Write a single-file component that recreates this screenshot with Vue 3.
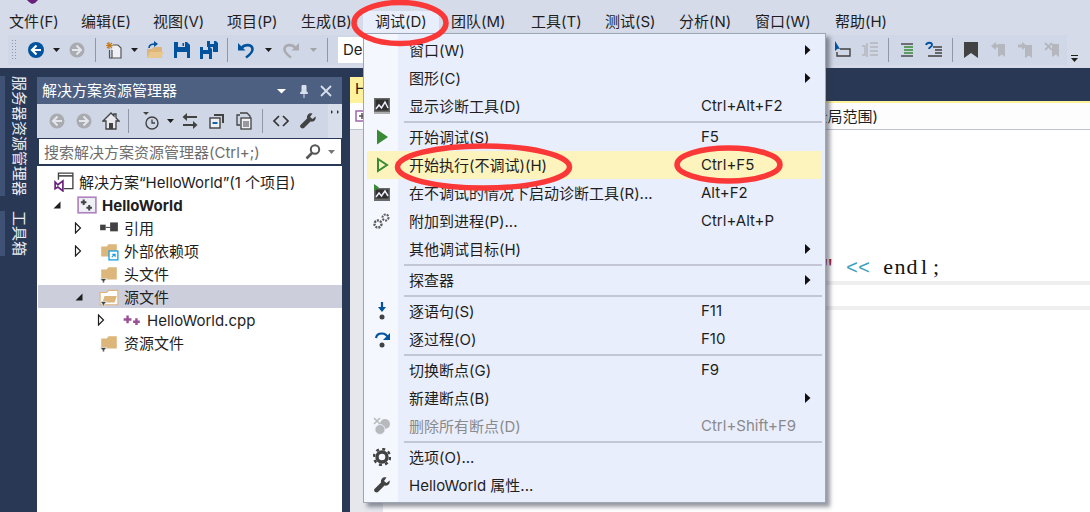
<template>
  <div class="page">
    <div class="titlebar">
      <svg class="vs-logo" width="12" height="4" viewBox="0 0 12 4"><path d="M0 0h11L8 3 5 4 2 2z" fill="#68217a" /></svg>
    </div>

    <nav class="menubar">
      <span
        v-for="item in menuBar"
        :key="item.label"
        class="menubar-item"
        :class="{ active: item.label === '调试(D)' }"
        :style="{ width: item.width + 'px' }"
      >{{ item.label }}</span>
    </nav>

    <div class="toolbar">
      <span class="grip"></span>
      <template v-for="(tool, i) in mainTools" :key="i">
        <span v-if="tool === '|'" class="tool-sep"></span>
        <span v-else-if="tool === 'dd'" class="tool-dd"><svg width="9" height="6" viewBox="0 0 9 6"><path d="M1 1h7L4.500 5z" fill="#1e1e1e" /></svg></span>
        <span v-else-if="tool === 'ddw'" class="tool-dd wide"><svg width="9" height="6" viewBox="0 0 9 6"><path d="M1 1h7L4.500 5z" fill="#1e1e1e" /></svg></span>
        <span v-else-if="tool === 'ddg'" class="tool-dd wide"><svg width="9" height="6" viewBox="0 0 9 6"><path d="M1 1h7L4.500 5z" fill="#a2a4a5" /></svg></span>
        <span v-else class="tool"><svg width="18" height="18" viewBox="0 0 18 18" v-html="icons[tool]"></svg></span>
      </template>
      <span class="combo">Debug</span>

      <div class="toolbar-right">
        <template v-for="(tool, i) in rightTools" :key="i">
          <span v-if="tool === '|'" class="tool-sep"></span>
          <span v-else class="tool"><svg width="18" height="18" viewBox="0 0 18 18" v-html="icons[tool]"></svg></span>
        </template>
        <span class="tool-overflow">
          <svg width="9" height="9" viewBox="0 0 9 9"><path d="M1 1h7v1H1zM1 4h7L4.500 8z" fill="#1e1e1e" /></svg>
        </span>
      </div>
    </div>

    <main class="workspace">
      <aside class="side-tabs">
        <span class="side-tab">服务器资源管理器</span>
        <span class="side-tab">工具箱</span>
      </aside>

      <section class="explorer">
        <header class="explorer-title">
          <span class="title-text">解决方案资源管理器</span>
          <span class="title-actions">
            <svg width="14" height="14" viewBox="0 0 14 14"><path d="M2 5h9L6.500 9.500z" fill="#fff" /></svg>
            <svg width="14" height="14" viewBox="0 0 14 14"><path d="M5 1.500h4v6l1.500 1v1h-7v-1L5 7.500zM7 10v4" fill="#d8dfec" stroke="#d8dfec" /></svg>
            <svg width="14" height="14" viewBox="0 0 14 14"><path d="M2 2l10 10M12 2 2 12" stroke="#d8dfec" stroke-width="1.800" /></svg>
          </span>
        </header>

        <div class="explorer-tools">
          <template v-for="(tool, i) in explorerTools" :key="i">
            <span v-if="tool === '|'" class="tool-sep"></span>
            <span v-else-if="tool === 'dd'" class="tool-dd narrow"><svg width="9" height="6" viewBox="0 0 9 6"><path d="M1 1h7L4.500 5z" fill="#1e1e1e" /></svg></span>
            <span v-else class="tool"><svg width="18" height="18" viewBox="0 0 18 18" v-html="icons[tool]"></svg></span>
          </template>
          <span class="explorer-overflow">
            <svg width="9" height="5" viewBox="0 0 9 5"><path d="M0 0l2 2-2 2zM6 0l2 2-2 2z" fill="#333" /></svg>
          </span>
        </div>

        <div class="explorer-search">
          <span class="search-hint">搜索解决方案资源管理器(Ctrl+;)</span>
          <svg width="18" height="18" viewBox="0 0 18 18"><circle cx="11" cy="6.500" r="4.200" fill="none" stroke="#555" stroke-width="2" /><path d="M8 10 2.500 15.500" stroke="#555" stroke-width="2.600" /></svg>
          <svg class="search-drop" width="9" height="6" viewBox="0 0 9 6"><path d="M1 1h7L4.500 5z" fill="#777" /></svg>
        </div>

        <ul class="tree">
          <li
            v-for="row in treeRows"
            :key="row.label"
            class="tree-row"
            :class="{ selected: row.selected, strong: row.strong, latin: row.latin }"
            :style="{ paddingLeft: row.indent + 'px' }"
          >
            <span v-if="row.expander" class="expander">
              <svg width="10" height="12" viewBox="0 0 10 12">
                <path v-if="row.expander === 'open'" d="M8.500 2.500v7h-7z" fill="#1e1e1e" />
                <path v-else d="M1.500 1v10l5-5z" fill="#fff" stroke="#1e1e1e" stroke-width="1.200" />
              </svg>
            </span>
            <svg class="tree-icon" width="20" height="20" viewBox="0 0 18 18" v-html="icons[row.icon]"></svg>
            <span class="tree-label">{{ row.label }}</span>
          </li>
        </ul>
      </section>

      <section class="editor">
        <div class="doc-tabs">
          <span class="doc-tab">HelloWorld.cpp</span>
        </div>
        <div class="nav-bar">
          <svg width="14" height="14" viewBox="0 0 14 14"><rect x="1" y="2" width="12" height="10" fill="#fff" stroke="#9b6aa8" stroke-width="1.500" /><path d="M4 7h6M7 4v6" stroke="#555" stroke-width="1.500" /></svg>
          <span class="nav-scope">(全局范围)</span>
        </div>
        <div class="code-area">
          <div class="code-margin"></div>
          <div class="code">
            <div class="code-line"><span class="str">"</span> <span class="op">&lt;&lt;</span> <span v-for="(ch, i) in 'endl;'" :key="i" class="cell">{{ ch }}</span></div>
            <div class="current-line"></div>
          </div>
        </div>
      </section>
    </main>

    <div class="drop-menu">
      <template v-for="(row, i) in debugMenu" :key="i">
        <div v-if="row.sep" class="menu-sep"></div>
        <div v-else class="menu-row" :class="{ hot: row.hot, disabled: row.disabled }">
          <span class="menu-icon">
            <svg v-if="row.icon" width="18" height="18" viewBox="0 0 18 18" v-html="icons[row.icon]"></svg>
          </span>
          <span class="menu-label">{{ row.label }}</span>
          <span class="menu-key">{{ row.key }}</span>
          <svg v-if="row.sub" class="menu-arrow" width="6" height="10" viewBox="0 0 6 10"><path d="M0 0l5.500 5L0 10z" fill="#111" /></svg>
        </div>
      </template>
    </div>

    <svg class="marks" width="1090" height="512" viewBox="0 0 1090 512">
      <ellipse cx="400" cy="23" rx="46" ry="20.500" />
      <ellipse cx="483.500" cy="167" rx="86" ry="21" />
      <ellipse cx="728.500" cy="164.500" rx="51.500" ry="16.500" />
    </svg>
  </div>
</template>

<script setup>
const menuBar = [
  { label: '文件(F)', width: 72 },
  { label: '编辑(E)', width: 72 },
  { label: '视图(V)', width: 74 },
  { label: '项目(P)', width: 74 },
  { label: '生成(B)', width: 74 },
  { label: '调试(D)', width: 76 },
  { label: '团队(M)', width: 80 },
  { label: '工具(T)', width: 74 },
  { label: '测试(S)', width: 74 },
  { label: '分析(N)', width: 76 },
  { label: '窗口(W)', width: 80 },
  { label: '帮助(H)', width: 76 }
]

const mainTools = ['back', 'dd', 'fwd', '|', 'newproj', 'dd', 'open', 'save', 'saveall', '|', 'undo', 'ddw', 'redo', 'ddg', '|']
const rightTools = ['cursor', 'hint', '|', 'outdent', 'comment', '|', 'mark', 'markprev', 'marknext', 'markclear']
const explorerTools = ['backg', 'fwdg', 'home', '|', 'history', 'dd', 'sync', 'collapse', 'copies', '|', 'code', 'wrench']

const treeRows = [
  { label: '解决方案“HelloWorld”(1 个项目)', indent: 16, icon: 'sln' },
  { label: 'HelloWorld', indent: 14, icon: 'proj', expander: 'open', strong: true, latin: true },
  { label: '引用', indent: 36, icon: 'refs', expander: 'closed' },
  { label: '外部依赖项', indent: 36, icon: 'extdeps', expander: 'closed' },
  { label: '头文件', indent: 61, icon: 'filter' },
  { label: '源文件', indent: 36, icon: 'filteropen', expander: 'open', selected: true },
  { label: 'HelloWorld.cpp', indent: 59, icon: 'cpp', expander: 'closed', latin: true },
  { label: '资源文件', indent: 61, icon: 'filter' }
]

const debugMenu = [
  { label: '窗口(W)', sub: true },
  { label: '图形(C)', sub: true },
  { label: '显示诊断工具(D)', key: 'Ctrl+Alt+F2', icon: 'diag' },
  { sep: true },
  { label: '开始调试(S)', key: 'F5', icon: 'play' },
  { label: '开始执行(不调试)(H)', key: 'Ctrl+F5', icon: 'playhollow', hot: true },
  { label: '在不调试的情况下启动诊断工具(R)...', key: 'Alt+F2', icon: 'diagplay' },
  { label: '附加到进程(P)...', key: 'Ctrl+Alt+P', icon: 'gears' },
  { label: '其他调试目标(H)', sub: true },
  { sep: true },
  { label: '探查器', sub: true },
  { sep: true },
  { label: '逐语句(S)', key: 'F11', icon: 'stepinto' },
  { label: '逐过程(O)', key: 'F10', icon: 'stepover' },
  { sep: true },
  { label: '切换断点(G)', key: 'F9' },
  { label: '新建断点(B)', sub: true },
  { label: '删除所有断点(D)', key: 'Ctrl+Shift+F9', icon: 'clearbp', disabled: true },
  { sep: true },
  { label: '选项(O)...', icon: 'gear' },
  { label: 'HelloWorld 属性...', icon: 'wrench' }
]

const folder = '<path d="M2 5h5l1.500-2H16v11H2z" fill="#dcb67a"/>'
const filterMark = '<path d="M1 13h6l-2.200 2.500V17H3.200v-1.500z" fill="#424242" stroke="#fff" stroke-width=".6"/>'

const icons = {
  back: '<circle cx="9" cy="9" r="8" fill="#00539c"/><path d="M9.500 4.500 5 9l4.500 4.500M5.500 9H14" fill="none" stroke="#fff" stroke-width="2.200"/>',
  fwd: '<circle cx="9" cy="9" r="7.500" fill="#a9abb0"/><path d="M8.500 4.500 13 9l-4.500 4.500M12.500 9H4" fill="none" stroke="#e4e6ee" stroke-width="2"/>',
  backg: '<circle cx="9" cy="9" r="7.500" fill="#a9abb0"/><path d="M9.500 4.500 5 9l4.500 4.500M5.500 9H14" fill="none" stroke="#e4e6ee" stroke-width="2"/>',
  fwdg: '<circle cx="9" cy="9" r="7.500" fill="#a9abb0"/><path d="M8.500 4.500 13 9l-4.500 4.500M12.500 9H4" fill="none" stroke="#e4e6ee" stroke-width="2"/>',
  newproj: '<path d="M4 1v7M1 4.500h7M2 2l5 5M7 2 2 7" stroke="#c27d1a" stroke-width="1.200"/><path d="M8 4h5l3 3v10H7V9" fill="#eef0f6" stroke="#555" stroke-width="1.200"/><path d="M4.500 9v8H7" fill="none" stroke="#555" stroke-width="1.200"/>',
  open: '<path d="M1 8h5l1.500-2H16v11H1z" fill="#dcb67a"/><path d="M1 17l3-6h14l-3 6z" fill="#e8c88f"/><path d="M3 7C3 4 5 3 9 3" fill="none" stroke="#00539c" stroke-width="1.600"/><path d="M8 0l4 3-4 3z" fill="#00539c"/>',
  save: '<path d="M1 1h13l3 3v13H1z" fill="#00539c"/><path d="M5 1h7v5H5z" fill="#d0d7e6"/><path d="M9.500 2h1.500v3H9.500z" fill="#00539c"/><path d="M4 11h10v6H4z" fill="#d0d7e6"/>',
  saveall: '<path d="M7 0h9l2 2v9h-5V6H7z" fill="#00539c"/><path d="M10 0h4v3h-4z" fill="#d0d7e6"/><path d="M0 6h10l2 2v10H0z" fill="#00539c"/><path d="M3 6h5v3H3zM3 13h6v5H3z" fill="#d0d7e6"/>',
  undo: '<path d="M4.500 7C8 3 15 3 15.500 8c.3 3.500-3 6-6.500 8.500" fill="none" stroke="#00539c" stroke-width="2.600"/><path d="M1 2v7.500h7.500z" fill="#00539c"/>',
  redo: '<path d="M13.500 7C10 3 3 3 2.500 8c-.3 3.500 3 6 6.500 8.500" fill="none" stroke="#a9abb0" stroke-width="2.600"/><path d="M17 2v7.500H9.500z" fill="#a9abb0"/>',
  cursor: '<path d="M1 0v10l2.500-2.300L6 8z" fill="#00539c"/><path d="M6 8h10v7H3v-4" fill="none" stroke="#424242" stroke-width="1.400"/>',
  hint: '<path d="M6 2v14" stroke="#b4b7bd" stroke-width="1.500"/><path d="M1 5h3v9H1M9 2h8M9 6h8M9 10h8M9 14h8" fill="none" stroke="#b4b7bd" stroke-width="1.400"/>',
  outdent: '<path d="M3 3h12" stroke="#424242" stroke-width="1.400"/><path d="M6 6h9M6 9h9M6 12h9" stroke="#388a34" stroke-width="1.400"/><path d="M3 15h12" stroke="#424242" stroke-width="1.400"/>',
  comment: '<path d="M1 4c1-3 6-3 6 0 0 2-3 2-3 4" fill="none" stroke="#00539c" stroke-width="1.800"/><path d="M8 6h9M10 9h7M10 12h7M3 15h14" stroke="#424242" stroke-width="1.400"/>',
  mark: '<path d="M2 1h14v16l-7-5-7 5z" fill="#424242"/>',
  markprev: '<path d="M9 3h7v13l-3-2.500-4 2.500z" fill="#b4b7bd"/><path d="M7 1 2 5l5 4V6.500h3v-3H7z" fill="#b4b7bd"/>',
  marknext: '<path d="M6 3h7v13l-3-2.500L6 16z" fill="#b4b7bd" transform="translate(3 1)"/><path d="M6 1l5 4-5 4V6.500H2v-3h4z" fill="#b4b7bd"/>',
  markclear: '<path d="M9 3h7v13l-3-2.500L9 16z" fill="#b4b7bd"/><path d="M2 2l7 7M9 2 2 9" stroke="#b4b7bd" stroke-width="1.800"/>',
  home: '<path d="M9 1 1 9h3v8h10V9h3l-3-3V2h-2v2z" fill="#e8e9ef" stroke="#424242" stroke-width="1.300"/><rect x="7" y="11" width="4" height="6" fill="#424242"/>',
  history: '<path d="M1 0h6L4 3z" fill="#424242"/><circle cx="10" cy="11" r="6" fill="none" stroke="#424242" stroke-width="1.400"/><path d="M10 7.500V11h3" fill="none" stroke="#424242" stroke-width="1.300"/>',
  sync: '<path d="M6 1 1.500 5 6 9V6h10V4H6zM12 9l4.500 4L12 17v-3H2v-2h10z" fill="#424242"/>',
  collapse: '<path d="M6 2h10v9h-2V4H6z" fill="#424242"/><rect x="2" y="6" width="10" height="10" fill="#eef0f6" stroke="#424242" stroke-width="1.400"/><path d="M4.500 11h5" stroke="#00539c" stroke-width="1.800"/>',
  copies: '<path d="M5 13H2V3h3M5 1h7l3 3v3" fill="none" stroke="#424242" stroke-width="1.300"/><rect x="6" y="6" width="10" height="11" fill="#eef0f6" stroke="#424242" stroke-width="1.300"/><path d="M8 10h6M8 12h6M8 14h6" stroke="#424242"/>',
  code: '<path d="M7 4 2 9l5 5M11 4l5 5-5 5" fill="none" stroke="#333" stroke-width="1.700"/>',
  wrench: '<path d="M16.500 4.500 13.500 7 11 5l2.500-3.500C10.500.5 7.500 2.500 8 6.500L1.500 13c-1.500 2 1.500 4.500 3.500 3l6.500-6.500c3.500.8 6-2 5-5.500z" fill="#424242"/>',
  sln: '<path d="M4 7V1h13v14H9" fill="#fff" stroke="#424242" stroke-width="1.200"/><path d="M4 3.500h13" stroke="#424242" stroke-width="1.400"/><path d="M1 9v6l2.500-1.500L8 17V8l-4.500 3.500z" fill="none" stroke="#68217a" stroke-width="1.500"/>',
  proj: '<rect x="1" y="2" width="16" height="14" fill="#eef0f6" stroke="#b183bf" stroke-width="1.500"/><path d="M6 4v5M3.500 6.500h5M11 9v5M8.500 11.500h5" stroke="#424242" stroke-width="1.800"/>',
  refs: '<rect x="1" y="6" width="5" height="5" fill="#424242"/><path d="M6 8.500h4" stroke="#555"/><rect x="10" y="4" width="7" height="8" fill="#424242"/>',
  extdeps: folder + '<rect x="9" y="9" width="8" height="8" fill="#fff" stroke="#1ba1e2" stroke-width="1.200"/><path d="M11.500 14.500 14 12M12 12h2.500v2.500" fill="none" stroke="#1ba1e2"/>',
  filter: folder + filterMark,
  filteropen: '<path d="M1 5h6l1.500-2H17v13H1z" fill="#fff" stroke="#dcb67a"/><path d="M3 14l2-6h11l-2 6z" fill="#dcb67a"/>' + filterMark,
  cpp: '<path d="M5 5v7M1.500 8.500h7M13 7.500v6M10 10.500h6" stroke="#9b4f96" stroke-width="2.200"/>',
  diag: '<rect x="1" y="1" width="16" height="16" fill="#6a6a6a"/><rect x="2.500" y="2.500" width="13" height="11" fill="#2f2f2f"/><path d="M3 12l3-4 2.500 3L12 5l3 6" fill="none" stroke="#eef" stroke-width="1.500"/><path d="M1 16h16" stroke="#c4c4c4" stroke-width="1.500"/>',
  diagplay: '<rect x="1" y="4" width="16" height="13" fill="#6a6a6a"/><rect x="2.500" y="5.500" width="13" height="9" fill="#2f2f2f"/><path d="M3 13l3-4 2.500 3L12 7l3 5" fill="none" stroke="#eef" stroke-width="1.500"/><path d="M1 0v7l5-3.500z" fill="#388a34"/>',
  play: '<path d="M4 1.500v15L15 9z" fill="#388a34"/>',
  playhollow: '<path d="M5 3v12l9-6z" fill="none" stroke="#388a34" stroke-width="2"/>',
  gears: '<circle cx="12.500" cy="5.500" r="3" fill="none" stroke="#5a5a5a" stroke-width="2" stroke-dasharray="2 1"/><circle cx="5" cy="12" r="3.500" fill="none" stroke="#5a5a5a" stroke-width="2.400" stroke-dasharray="2 1"/>',
  stepinto: '<path d="M9 0v6" stroke="#00539c" stroke-width="2.200"/><path d="M5 5h8L9 10z" fill="#00539c"/><circle cx="9" cy="15" r="2.500" fill="#424242"/>',
  stepover: '<path d="M3 8c1-6 10-6 12 0" fill="none" stroke="#00539c" stroke-width="2.200"/><path d="M17 3v7h-7z" fill="#00539c"/><circle cx="9" cy="15" r="2.500" fill="#424242"/>',
  clearbp: '<circle cx="12" cy="7" r="5" fill="#b8b9bc"/><circle cx="7" cy="12.500" r="5" fill="#b8b9bc" stroke="#e9eefd"/><path d="M1 1l6 6M7 1 1 7" stroke="#b8b9bc" stroke-width="1.500"/>',
  gear: '<circle cx="9" cy="9" r="5" fill="none" stroke="#424242" stroke-width="3.400"/><circle cx="9" cy="9" r="8" fill="none" stroke="#424242" stroke-width="2.400" stroke-dasharray="3 3.280"/>'
}
</script>

<style>
html,
body {
  margin: 0;
  background: #293955;
}
</style>

<style scoped>
.page {
  position: relative;
  width: 1090px;
  height: 512px;
  overflow: hidden;
  display: flex;
  flex-direction: column;
  background: #293955;
  color: #1e1e1e;
  font-family: Inter, "Noto Sans CJK SC", sans-serif;
  font-size: 15px;
}

.titlebar {
  height: 11px;
  padding-left: 27px;
  background: #d6dbe9;
  line-height: 0;
}

.vs-logo {
  display: block;
}

.menubar {
  display: flex;
  height: 22px;
  margin-bottom: 2px;
  background: #d6dbe9;
  line-height: 22px;
  white-space: nowrap;
  box-shadow: 0 2px 0 #d6dbe9;
}

.menubar-item {
  box-sizing: border-box;
  padding-left: 12px;
}

.menubar-item:first-child {
  margin-left: -3px;
}

.menubar-item.active {
  background: #e9eefd;
}

.toolbar {
  display: flex;
  align-items: center;
  height: 30px;
  padding-right: 10px;
  padding-left: 8px;
  padding-bottom: 3px;
  background: linear-gradient(#d0d7e6, #d0d7e6) 8px 0 / 1059px 30px no-repeat, #d6dbe9;
}

.grip {
  width: 6px;
  height: 22px;
  margin: 0 5px 0 3px;
  background: radial-gradient(circle, #8f97a8 0.8px, transparent 1px) 0 0 / 3px 3px;
}

.tool {
  display: flex;
  flex: 0 0 27px;
  align-items: center;
  justify-content: center;
}

.tool-dd {
  display: flex;
  flex: 0 0 14px;
  align-items: center;
  justify-content: center;
}

.tool-dd.wide {
  flex-basis: 18px;
}

.tool-dd.narrow {
  flex-basis: 12px;
}

.tool-sep {
  flex: 0 0 1px;
  height: 24px;
  margin: 0 4px 0 5px;
  background: #8f97a8;
}

.combo {
  width: 60px;
  height: 26px;
  margin-left: 6px;
  padding-left: 5px;
  background: #fff;
  line-height: 26px;
}

.toolbar-right {
  display: flex;
  align-items: center;
  margin-left: auto;
}

.tool-overflow {
  display: flex;
  align-items: flex-end;
  justify-content: center;
  box-sizing: border-box;
  width: 15px;
  height: 26px;
  padding-left: 3px;
}

.workspace {
  display: flex;
  flex: 1;
  min-height: 0;
  padding-top: 9px;
}

.side-tabs {
  display: flex;
  flex: 0 0 37px;
  flex-direction: column;
  gap: 15px;
  margin-top: -1px;
}

.side-tab {
  align-self: flex-start;
  padding-left: 4px;
  border-left: 5px solid #3f5175;
  color: #e9ecf4;
  line-height: 20px;
  writing-mode: vertical-rl;
  text-orientation: sideways;
}

.explorer {
  display: flex;
  flex: 0 0 305px;
  flex-direction: column;
  margin-right: 8px;
}

.explorer-title {
  display: flex;
  align-items: center;
  justify-content: space-between;
  height: 27px;
  padding: 0 9px 0 5px;
  background: #4d6082;
  color: #fff;
}

.title-text {
  margin-bottom: 2px;
}

.title-actions {
  display: flex;
  gap: 8px;
}

.explorer-tools {
  display: flex;
  align-items: center;
  height: 34px;
  padding-left: 6px;
  background: #cfd6e5;
}

.explorer-tools .tool-sep {
  margin: 0 8px 0 4px;
}

.explorer-tools .tool-sep:nth-of-type(n + 7) {
  margin: 0 4px 0 5px;
}

.explorer-overflow {
  display: flex;
  align-self: stretch;
  justify-content: center;
  width: 14px;
  margin-left: auto;
  padding-top: 6px;
  background: #d8deea;
}

.explorer-search {
  display: flex;
  align-items: center;
  height: 25px;
  margin: 1px 1px 2px 2px;
  padding: 0 5px;
  background: #fff;
}

.search-hint {
  flex: 1;
  color: #6d6d6d;
}

.search-drop {
  margin-left: 5px;
}

.tree {
  flex: 1;
  margin: 0;
  padding: 4px 0 0 1px;
  list-style: none;
  background: #fff;
}

.tree-row {
  display: flex;
  align-items: center;
  height: 23px;
}

.tree-row.selected {
  background: #cccedb;
}

.tree-row.strong {
  font-weight: 700;
}

.tree-row.latin .tree-label {
  margin-top: 2px;
}

.expander {
  display: flex;
  flex: 0 0 25px;
  align-items: center;
}

.tree-icon {
  flex: 0 0 20px;
  margin-right: 5px;
}

.editor {
  display: flex;
  flex: 1;
  flex-direction: column;
  min-width: 0;
}

.doc-tabs {
  height: 24px;
}

.doc-tab {
  display: inline-block;
  height: 24px;
  padding: 0 24px 0 5px;
  background: #fff29d;
  line-height: 24px;
}

.nav-bar {
  display: flex;
  align-items: center;
  height: 26px;
  padding-left: 5px;
  border-top: 2px solid #fff29d;
  border-bottom: 1px solid #bcc3d3;
  background: #fdfdfd;
}

.nav-scope {
  margin-top: -2px;
  margin-left: 438px;
}

.code-area {
  display: flex;
  flex: 1;
  background: #fff;
}

.code-margin {
  flex: 0 0 33px;
  background: #e6e7ed;
}

.code {
  flex: 1;
  padding-top: 123px;
}

.code-line {
  height: 28px;
  padding-left: 439px;
  color: #111;
  font-family: "Liberation Mono", monospace;
  font-size: 20px;
  line-height: 28px;
  white-space: pre;
}

.cell {
  display: inline-block;
  width: 12px;
  font-family: "Liberation Serif", serif;
  font-size: 22px;
  text-align: center;
}

.str {
  color: #a31515;
}

.op {
  color: #3f9fc0;
}

.current-line {
  height: 21px;
  border-top: 4px solid #efefef;
  border-bottom: 4px solid #efefef;
}

.drop-menu {
  position: absolute;
  top: 33px;
  left: 363px;
  box-sizing: border-box;
  width: 463px;
  height: 470px;
  padding: 2px 3px;
  border: 1px solid #9ba7b7;
  background: linear-gradient(90deg, #f5f7fe 34px, #e9eefd 34px);
  box-shadow: 4px 4px 4px rgba(50, 55, 70, 0.5);
}

.menu-row {
  display: flex;
  align-items: center;
  height: 28px;
}

.menu-row.hot {
  background: #fdf3bd;
}

.menu-row.disabled {
  color: #8a8a8a;
}

.menu-icon {
  display: flex;
  flex: 0 0 30px;
  align-items: center;
  justify-content: center;
  margin-right: 12px;
}

.menu-label {
  flex: 0 0 292px;
  margin-bottom: 1px;
  white-space: nowrap;
}

.menu-key {
  flex: 0 0 104px;
  margin-bottom: 1px;
  white-space: nowrap;
}

.menu-sep {
  height: 2px;
  margin: 1px 0 0 37px;
  background: #c2c6d5;
}

.marks {
  position: absolute;
  top: 0;
  left: 0;
  pointer-events: none;
}

.marks ellipse {
  fill: none;
  stroke: #fb3838;
  stroke-width: 5.500;
}
</style>
